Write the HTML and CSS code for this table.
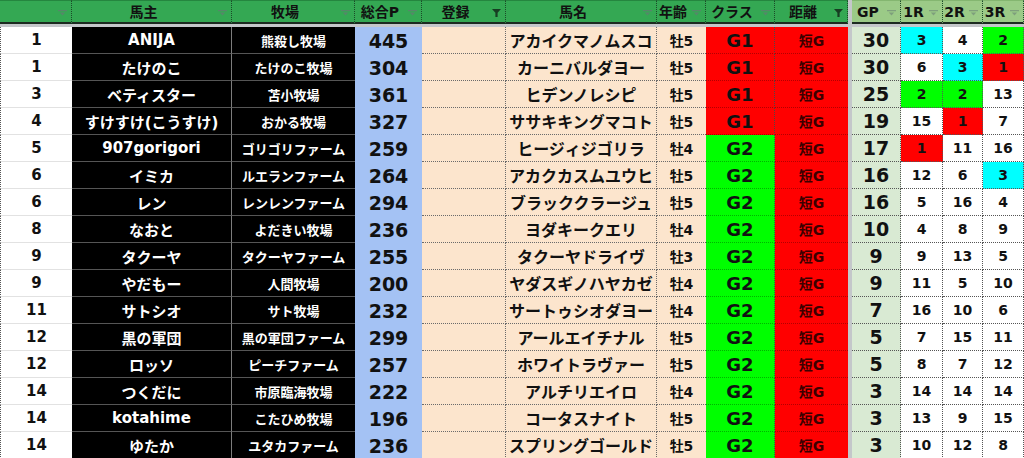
FILE: index.html
```html
<!DOCTYPE html>
<html lang="ja">
<head>
<meta charset="utf-8">
<title>順位表</title>
<link rel="stylesheet" href="styles.css">
</head>
<body>
<div class="sheet">
  <div class="row head">
    <div class="hc"><span class="t"></span><svg class="fi" viewBox="0 0 9 7"><path d="M0 0h9v1.3H0zM1.8 2.6h5.4L4.5 5.6z"/></svg></div>
    <div class="hc"><span class="t">馬主</span><svg class="fi" viewBox="0 0 9 7"><path d="M0 0h9v1.3H0zM1.8 2.6h5.4L4.5 5.6z"/></svg></div>
    <div class="hc"><span class="t">牧場</span><svg class="fi" viewBox="0 0 9 7"><path d="M0 0h9v1.3H0zM1.8 2.6h5.4L4.5 5.6z"/></svg></div>
    <div class="hc"><span class="t">総合P</span><svg class="fi" viewBox="0 0 9 7"><path d="M0 0h9v1.3H0zM1.8 2.6h5.4L4.5 5.6z"/></svg></div>
    <div class="hc"><span class="t">登録</span><svg class="fi on" viewBox="0 0 9 8"><path d="M0 0h9L5.6 3.8V8H3.4V3.8z"/></svg></div>
    <div class="hc"><span class="t">馬名</span><svg class="fi" viewBox="0 0 9 7"><path d="M0 0h9v1.3H0zM1.8 2.6h5.4L4.5 5.6z"/></svg></div>
    <div class="hc"><span class="t">年齢</span><svg class="fi" viewBox="0 0 9 7"><path d="M0 0h9v1.3H0zM1.8 2.6h5.4L4.5 5.6z"/></svg></div>
    <div class="hc"><span class="t">クラス</span><svg class="fi" viewBox="0 0 9 7"><path d="M0 0h9v1.3H0zM1.8 2.6h5.4L4.5 5.6z"/></svg></div>
    <div class="hc"><span class="t">距離</span><svg class="fi on" viewBox="0 0 9 8"><path d="M0 0h9L5.6 3.8V8H3.4V3.8z"/></svg></div>
    <div class="s"></div>
    <div class="hc lt"><span class="t">GP</span><svg class="fi" viewBox="0 0 9 7"><path d="M0 0h9v1.3H0zM1.8 2.6h5.4L4.5 5.6z"/></svg></div>
    <div class="hc lt"><span class="t">1R</span><svg class="fi" viewBox="0 0 9 7"><path d="M0 0h9v1.3H0zM1.8 2.6h5.4L4.5 5.6z"/></svg></div>
    <div class="hc lt"><span class="t">2R</span><svg class="fi" viewBox="0 0 9 7"><path d="M0 0h9v1.3H0zM1.8 2.6h5.4L4.5 5.6z"/></svg></div>
    <div class="hc lt"><span class="t">3R</span><svg class="fi" viewBox="0 0 9 7"><path d="M0 0h9v1.3H0zM1.8 2.6h5.4L4.5 5.6z"/></svg></div>
  </div>
  <div class="band"></div>

  <div class="row"><div class="a">1</div><div class="b">ANIJA</div><div class="c">熊殺し牧場</div><div class="d">445</div><div class="e"></div><div class="f">アカイクマノムスコ</div><div class="g">牡5</div><div class="h g1">G1</div><div class="i">短G</div><div class="s"></div><div class="j">30</div><div class="r cy">3</div><div class="r">4</div><div class="r gr">2</div></div>
  <div class="row"><div class="a">1</div><div class="b">たけのこ</div><div class="c">たけのこ牧場</div><div class="d">304</div><div class="e"></div><div class="f">カーニバルダヨー</div><div class="g">牡5</div><div class="h g1">G1</div><div class="i">短G</div><div class="s"></div><div class="j">30</div><div class="r">6</div><div class="r cy">3</div><div class="r rd">1</div></div>
  <div class="row"><div class="a">3</div><div class="b">ベティスター</div><div class="c">苫小牧場</div><div class="d">361</div><div class="e"></div><div class="f">ヒデンノレシピ</div><div class="g">牡5</div><div class="h g1">G1</div><div class="i">短G</div><div class="s"></div><div class="j">25</div><div class="r gr">2</div><div class="r gr">2</div><div class="r">13</div></div>
  <div class="row"><div class="a">4</div><div class="b">すけすけ(こうすけ)</div><div class="c">おかる牧場</div><div class="d">327</div><div class="e"></div><div class="f">ササキキングマコト</div><div class="g">牡5</div><div class="h g1">G1</div><div class="i">短G</div><div class="s"></div><div class="j">19</div><div class="r">15</div><div class="r rd">1</div><div class="r">7</div></div>
  <div class="row"><div class="a">5</div><div class="b">907gorigori</div><div class="c">ゴリゴリファーム</div><div class="d">259</div><div class="e"></div><div class="f">ヒージィジゴリラ</div><div class="g">牡4</div><div class="h g2">G2</div><div class="i">短G</div><div class="s"></div><div class="j">17</div><div class="r rd">1</div><div class="r">11</div><div class="r">16</div></div>
  <div class="row"><div class="a">6</div><div class="b">イミカ</div><div class="c">ルエランファーム</div><div class="d">264</div><div class="e"></div><div class="f">アカクカスムユウヒ</div><div class="g">牡5</div><div class="h g2">G2</div><div class="i">短G</div><div class="s"></div><div class="j">16</div><div class="r">12</div><div class="r">6</div><div class="r cy">3</div></div>
  <div class="row"><div class="a">6</div><div class="b">レン</div><div class="c">レンレンファーム</div><div class="d">294</div><div class="e"></div><div class="f">ブラッククラージュ</div><div class="g">牡5</div><div class="h g2">G2</div><div class="i">短G</div><div class="s"></div><div class="j">16</div><div class="r">5</div><div class="r">16</div><div class="r">4</div></div>
  <div class="row"><div class="a">8</div><div class="b">なおと</div><div class="c">よだきい牧場</div><div class="d">236</div><div class="e"></div><div class="f">ヨダキークエリ</div><div class="g">牡4</div><div class="h g2">G2</div><div class="i">短G</div><div class="s"></div><div class="j">10</div><div class="r">4</div><div class="r">8</div><div class="r">9</div></div>
  <div class="row"><div class="a">9</div><div class="b">タクーヤ</div><div class="c">タクーヤファーム</div><div class="d">255</div><div class="e"></div><div class="f">タクーヤドライヴ</div><div class="g">牡3</div><div class="h g2">G2</div><div class="i">短G</div><div class="s"></div><div class="j">9</div><div class="r">9</div><div class="r">13</div><div class="r">5</div></div>
  <div class="row"><div class="a">9</div><div class="b">やだもー</div><div class="c">人間牧場</div><div class="d">200</div><div class="e"></div><div class="f">ヤダスギノハヤカゼ</div><div class="g">牡4</div><div class="h g2">G2</div><div class="i">短G</div><div class="s"></div><div class="j">9</div><div class="r">11</div><div class="r">5</div><div class="r">10</div></div>
  <div class="row"><div class="a">11</div><div class="b">サトシオ</div><div class="c">サト牧場</div><div class="d">232</div><div class="e"></div><div class="f">サートゥシオダヨー</div><div class="g">牡4</div><div class="h g2">G2</div><div class="i">短G</div><div class="s"></div><div class="j">7</div><div class="r">16</div><div class="r">10</div><div class="r">6</div></div>
  <div class="row"><div class="a">12</div><div class="b">黒の軍団</div><div class="c">黒の軍団ファーム</div><div class="d">299</div><div class="e"></div><div class="f">アールエイチナル</div><div class="g">牡5</div><div class="h g2">G2</div><div class="i">短G</div><div class="s"></div><div class="j">5</div><div class="r">7</div><div class="r">15</div><div class="r">11</div></div>
  <div class="row"><div class="a">12</div><div class="b">ロッソ</div><div class="c">ピーチファーム</div><div class="d">257</div><div class="e"></div><div class="f">ホワイトラヴァー</div><div class="g">牡5</div><div class="h g2">G2</div><div class="i">短G</div><div class="s"></div><div class="j">5</div><div class="r">8</div><div class="r">7</div><div class="r">12</div></div>
  <div class="row"><div class="a">14</div><div class="b">つくだに</div><div class="c">市原臨海牧場</div><div class="d">222</div><div class="e"></div><div class="f">アルチリエイロ</div><div class="g">牡4</div><div class="h g2">G2</div><div class="i">短G</div><div class="s"></div><div class="j">3</div><div class="r">14</div><div class="r">14</div><div class="r">14</div></div>
  <div class="row"><div class="a">14</div><div class="b">kotahime</div><div class="c">こたひめ牧場</div><div class="d">196</div><div class="e"></div><div class="f">コータスナイト</div><div class="g">牡5</div><div class="h g2">G2</div><div class="i">短G</div><div class="s"></div><div class="j">3</div><div class="r">13</div><div class="r">9</div><div class="r">15</div></div>
  <div class="row"><div class="a">14</div><div class="b">ゆたか</div><div class="c">ユタカファーム</div><div class="d">236</div><div class="e"></div><div class="f">スプリングゴールド</div><div class="g">牡5</div><div class="h g2">G2</div><div class="i">短G</div><div class="s"></div><div class="j">3</div><div class="r">10</div><div class="r">12</div><div class="r">8</div></div>
</div>
</body>
</html>
```

FILE: styles.css
```css
html, body {
  margin: 0;
  padding: 0;
  background: #ffffff;
}

body {
  font-family: "DejaVu Sans", "Noto Sans CJK JP", sans-serif;
  font-weight: bold;
  color: #111111;
  width: 1024px;
  height: 458px;
  overflow: hidden;
}

.sheet {
  --cols: 72px 160px 123px 67px 84px 151px 49px 69px 73px 4px 49px 42px 40px 41px;
  display: flex;
  flex-direction: column;
}

.row {
  display: grid;
  grid-template-columns: var(--cols);
  height: 27px;
}

.row > div {
  box-sizing: border-box;
  display: flex;
  align-items: center;
  justify-content: center;
  white-space: nowrap;
  overflow: hidden;
  min-width: 0;
}

/* header */
.row.head {
  height: 24px;
}

.hc {
  background: #34a853;
  border-top: 1px solid #25863f;
  border-bottom: 2px solid #1c2a20;
  border-right: 1px dotted #1b4a29;
  font-size: 14px;
  display: grid !important;
  grid-template-columns: 1fr 9px;
  column-gap: 3px;
  padding-right: 4px;
  align-items: center;
}

.hc.lt {
  background: #9bca87;
  border-top-color: #84b670;
}

.hc .t {
  text-align: center;
  line-height: 20px;
  overflow: visible;
}

.fi {
  width: 9px;
  height: 7px;
  fill: #56876a;
  margin-top: 3px;
}

.hc.lt .fi {
  fill: #7e9f7c;
}

.fi.on {
  height: 8px;
  fill: #173d22;
}

.band {
  height: 3px;
  background: #c4c7ca;
  flex: none;
}

/* columns */
.a {
  background: #ffffff;
  border-left: 1px dotted #555555;
  border-bottom: 1px solid #e2e2e2;
  font-size: 15px;
}

.b {
  background: #000000;
  color: #ffffff;
  border-bottom: 1px solid #555555;
  border-right: 1px solid #7c7c7c;
  font-size: 15px;
}

.c {
  background: #000000;
  color: #ffffff;
  border-bottom: 1px solid #555555;
  font-size: 13px;
}

.d {
  background: #a4c2f4;
  font-size: 19px;
}

.e,
.f,
.g {
  background: #fce5cd;
  border-bottom: 1px dotted #6a6a6a;
}

.e,
.f {
  border-right: 1px dotted #6a6a6a;
}

.f {
  font-size: 16px;
}

.g {
  font-size: 14px;
}

.h {
  font-size: 18px;
  border-right: 1px dotted #4a4a4a;
  border-bottom: 1px dotted rgba(0, 0, 0, 0.3);
}

.g1 {
  background: #ff0000;
}

.g2 {
  background: #00ff00;
}

.i {
  background: #ff0000;
  color: #3a0000;
  font-size: 14px;
  border-bottom: 1px dotted rgba(0, 0, 0, 0.3);
}

.s {
  background: #c4c7ca;
}

.j {
  background: #d9ead3;
  font-size: 19px;
  border-right: 1px dotted #555555;
  border-bottom: 1px dotted #555555;
}

.r {
  background: #ffffff;
  font-size: 14px;
  border-right: 1px dotted #555555;
  border-bottom: 1px dotted #555555;
}

.r.cy {
  background: #00ffff;
}

.r.gr {
  background: #00ff00;
}

.r.rd {
  background: #ff0000;
}
```
